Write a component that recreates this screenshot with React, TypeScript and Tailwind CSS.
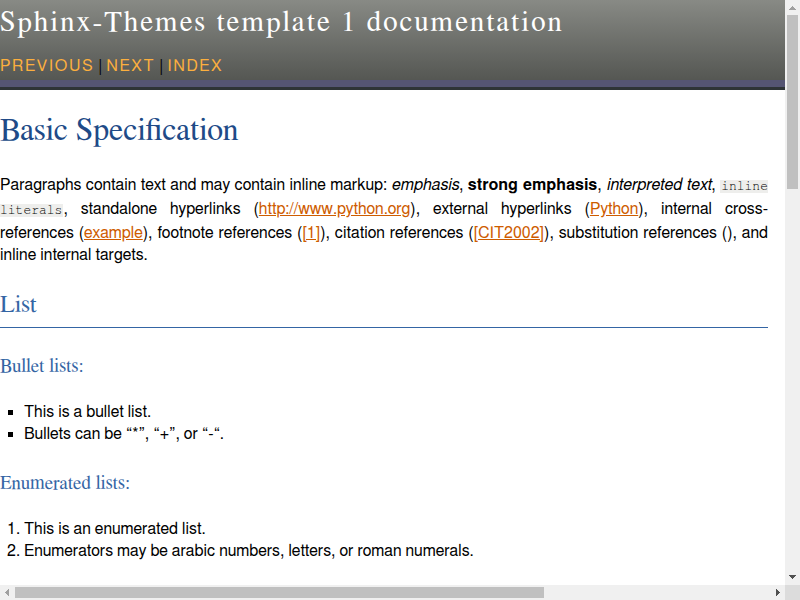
import type { ReactNode } from "react";

const navLinks = ["Previous", "Next", "Index"];
const bullets = ["This is a bullet list.", "Bullets can be “*”, “+”, or “-“."];
const steps = [
  "This is an enumerated list.",
  "Enumerators may be arabic numbers, letters, or roman numerals.",
];

function Link({ children }: { children: ReactNode }) {
  return (
    <a href="#" className="text-[#ce5c00] underline">
      {children}
    </a>
  );
}

function Literal({ children }: { children: ReactNode }) {
  return (
    <code className="bg-[#eeeeec] px-px font-[FreeMono,'Liberation_Mono',monospace] text-[13px] text-black">
      {children}
    </code>
  );
}

function SubHeading({ children }: { children: ReactNode }) {
  return (
    <h3 className="font-[FreeSerif,'Liberation_Serif',serif] text-[19px] leading-[22px] text-[#3465a4] [font-kerning:normal]">
      {children}
    </h3>
  );
}

function Header() {
  return (
    <header className="border-b-3 border-[#2e3436]">
      <div className="h-20 bg-linear-to-b from-[#888a85] to-[#555753]">
        <h1 className="pt-[5px] font-[FreeSerif,'Liberation_Serif',serif] text-[29px] leading-9 tracking-[2px] text-white">
          Sphinx-Themes template 1 documentation
        </h1>
        <nav className="flex gap-1 pt-3.5 leading-[22px] tracking-widest uppercase">
          {navLinks.map((label, i) => (
            <span key={label} className="flex gap-1">
              {i > 0 && <span className="tracking-normal">|</span>}
              <a href="#" className="text-[#fcaf3e]">
                {label}
              </a>
            </span>
          ))}
        </nav>
      </div>
      <div className="h-[7px] bg-[#555573]" />
    </header>
  );
}

function VerticalScrollbar() {
  return (
    <div aria-hidden="true" className="flex flex-col items-center bg-[#f0f0f0]">
      <svg className="size-[15px]" viewBox="0 0 15 15" shapeRendering="crispEdges">
        <path d="M7 6h1v1h1v1h1v1h1v1H4V9h1V8h1V7h1z" fill="#a0a0a0" />
      </svg>
      <div className="min-h-0 w-full flex-1 px-[2px]">
        <div className="h-[31.4%] w-[11px] bg-[#c0c0c0]" />
      </div>
      <svg className="size-[15px]" viewBox="0 0 15 15" shapeRendering="crispEdges">
        <path d="M4 5h7v1h-1v1H9v1H8v1H7V8H6V7H5V6H4z" fill="#505050" />
      </svg>
    </div>
  );
}

function HorizontalScrollbar() {
  return (
    <div aria-hidden="true" className="flex items-center bg-[#f0f0f0]">
      <svg className="size-[15px]" viewBox="0 0 15 15" shapeRendering="crispEdges">
        <path d="M9 4v7H8v-1H7V9H6V8H5V7h1V6h1V5h1V4z" fill="#a0a0a0" />
      </svg>
      <div className="flex-1">
        <div className="h-[11px] w-[70%] bg-[#c0c0c0]" />
      </div>
      <svg className="size-[15px]" viewBox="0 0 15 15" shapeRendering="crispEdges">
        <path d="M6 4v7h1v-1h1V9h1V8h1V7H9V6H8V5H7V4z" fill="#505050" />
      </svg>
    </div>
  );
}

export default function App() {
  return (
    <div className="grid h-screen grid-cols-[minmax(0,1fr)_15px] grid-rows-[minmax(0,1fr)_15px] bg-white font-[FreeSans,'Liberation_Sans',sans-serif] text-base leading-[22px] text-black [font-kerning:none]">
      <div className="overflow-hidden">
        <Header />
        <main className="max-w-3xl">
          <h1 className="pt-[21px] font-[FreeSerif,'Liberation_Serif',serif] text-[32px] leading-[38px] text-[#204a87] [font-kerning:normal]">
            Basic Specification
          </h1>
          <p className="pt-[25px] text-justify">
            Paragraphs contain text and may contain inline markup: <em>emphasis</em>,{" "}
            <strong>strong emphasis</strong>, <cite>interpreted text</cite>,{" "}
            <Literal>inline literals</Literal>, standalone hyperlinks (
            <Link>http://www.python.org</Link>), external hyperlinks (<Link>Python</Link>),
            internal cross-references (<Link>example</Link>), footnote references (
            <Link>[1]</Link>), citation references (<Link>[CIT2002]</Link>), substitution
            references (), and inline internal targets.
          </p>
          <h2 className="mt-6 border-b border-[#3465a4] pb-[7px] font-[FreeSerif,'Liberation_Serif',serif] text-2xl leading-[30px] text-[#3465a4] [font-kerning:normal]">
            List
          </h2>
          <div className="pt-7">
            <SubHeading>Bullet lists:</SubHeading>
            <ul className="list-[square] pt-[23px] pl-6 marker:font-['Liberation_Sans']">
              {bullets.map((text) => (
                <li key={text}>{text}</li>
              ))}
            </ul>
          </div>
          <div className="pt-7">
            <SubHeading>Enumerated lists:</SubHeading>
            <ol className="list-decimal pt-[23px] pl-6">
              {steps.map((text) => (
                <li key={text}>{text}</li>
              ))}
            </ol>
          </div>
        </main>
      </div>
      <VerticalScrollbar />
      <HorizontalScrollbar />
      <div aria-hidden="true" className="bg-[#dcdcdc]" />
    </div>
  );
}
